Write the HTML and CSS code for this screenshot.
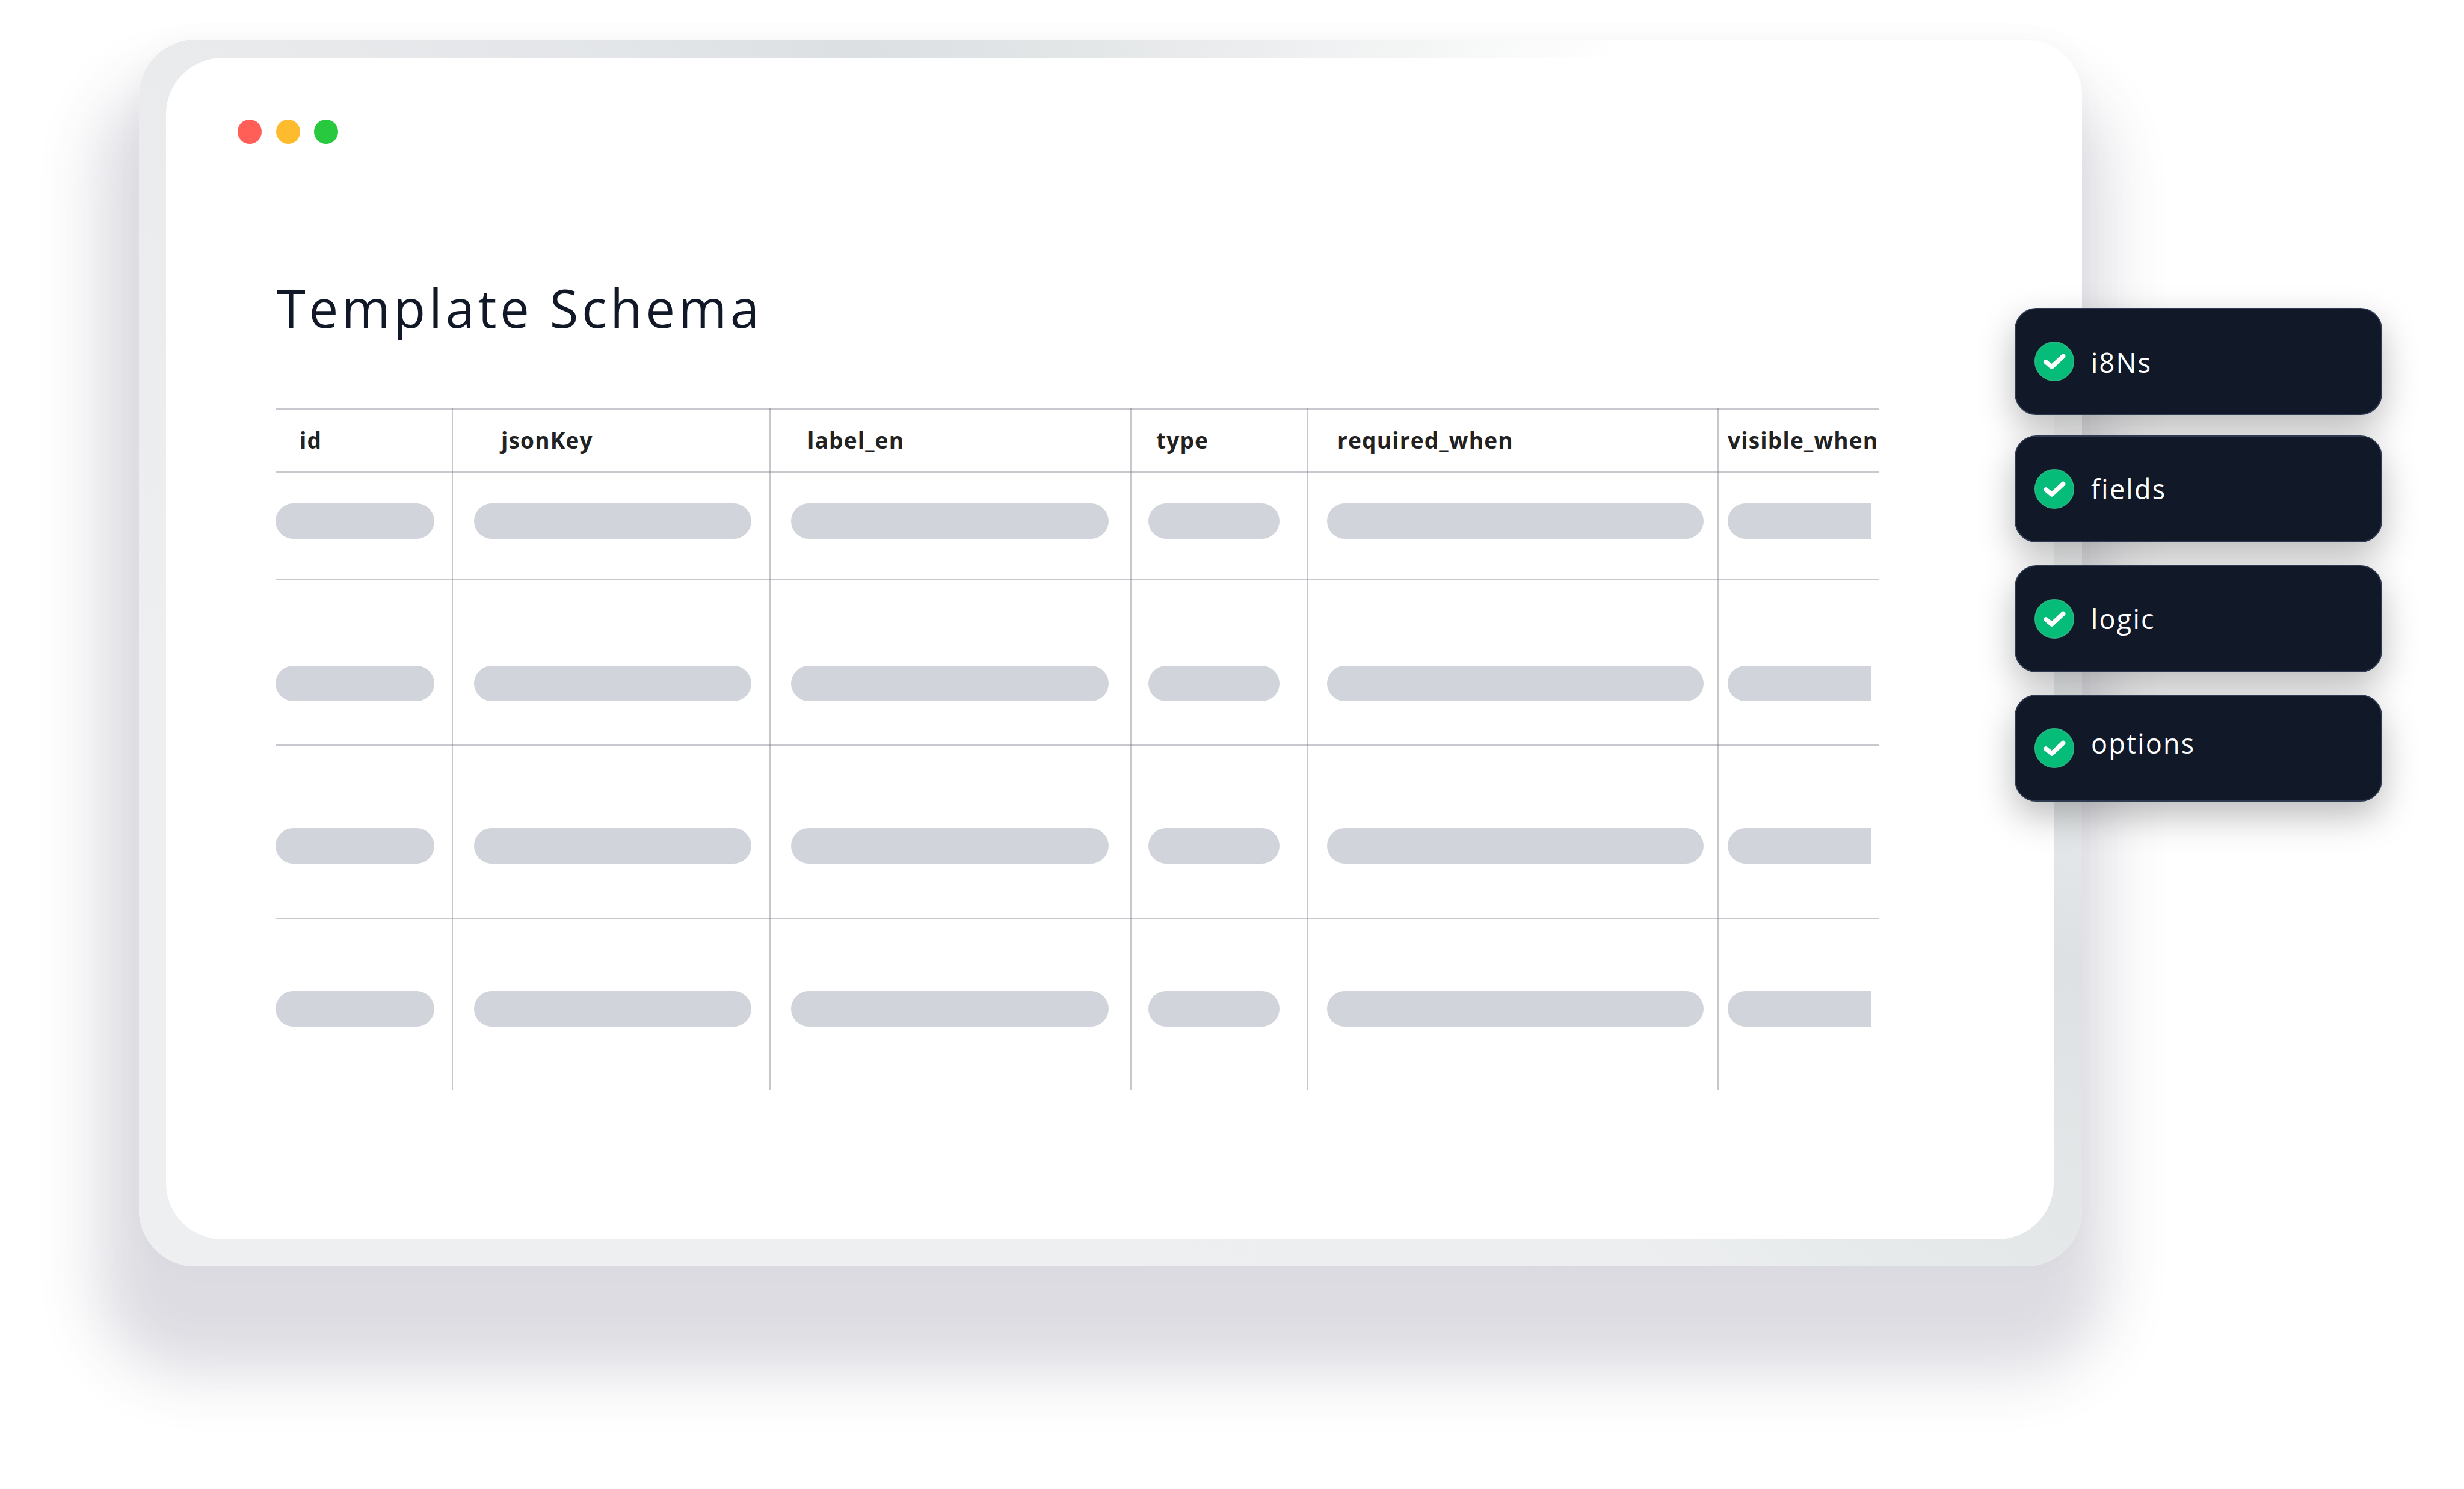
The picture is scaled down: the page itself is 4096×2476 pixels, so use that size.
FILE: index.html
```html
<!DOCTYPE html>
<html lang="en">
<head>
<meta charset="utf-8">
<title>Template Schema</title>
<link rel="stylesheet" href="styles.css">
</head>
<body>
<main class="stage">
  <section class="frame">
    <div class="sheet">
      <div class="dots">
        <span class="dot dot-red"></span>
        <span class="dot dot-yellow"></span>
        <span class="dot dot-green"></span>
      </div>
      <h1 class="title">Template Schema</h1>
      <div class="table">
        <div class="row row-head">
          <div class="cell c-id">id</div>
          <div class="cell c-key">jsonKey</div>
          <div class="cell c-label">label_en</div>
          <div class="cell c-type">type</div>
          <div class="cell c-req">required_when</div>
          <div class="cell c-vis">visible_when</div>
        </div>
        <div class="row row-1">
          <div class="cell"><div class="pill p-id"></div></div>
          <div class="cell"><div class="pill p-key"></div></div>
          <div class="cell"><div class="pill p-label"></div></div>
          <div class="cell"><div class="pill p-type"></div></div>
          <div class="cell"><div class="pill p-req"></div></div>
          <div class="cell"><div class="pill p-vis"></div></div>
        </div>
        <div class="row row-2">
          <div class="cell"><div class="pill p-id"></div></div>
          <div class="cell"><div class="pill p-key"></div></div>
          <div class="cell"><div class="pill p-label"></div></div>
          <div class="cell"><div class="pill p-type"></div></div>
          <div class="cell"><div class="pill p-req"></div></div>
          <div class="cell"><div class="pill p-vis"></div></div>
        </div>
        <div class="row row-3">
          <div class="cell"><div class="pill p-id"></div></div>
          <div class="cell"><div class="pill p-key"></div></div>
          <div class="cell"><div class="pill p-label"></div></div>
          <div class="cell"><div class="pill p-type"></div></div>
          <div class="cell"><div class="pill p-req"></div></div>
          <div class="cell"><div class="pill p-vis"></div></div>
        </div>
        <div class="row row-4">
          <div class="cell"><div class="pill p-id"></div></div>
          <div class="cell"><div class="pill p-key"></div></div>
          <div class="cell"><div class="pill p-label"></div></div>
          <div class="cell"><div class="pill p-type"></div></div>
          <div class="cell"><div class="pill p-req"></div></div>
          <div class="cell"><div class="pill p-vis"></div></div>
        </div>
      </div>
    </div>
  </section>
  <aside class="cards">
    <div class="card">
      <svg class="check" viewBox="0 0 70 70"><circle cx="35" cy="35" r="34" fill="#05bc79" stroke="#2bb583" stroke-width="2"/><path d="M20 36 L30.5 44.5 L50.5 26" fill="none" stroke="#fff" stroke-width="8" stroke-linecap="round" stroke-linejoin="round"/></svg>
      <span class="card-label l-i8ns">i8Ns</span>
    </div>
    <div class="card card-fields">
      <svg class="check" viewBox="0 0 70 70"><circle cx="35" cy="35" r="34" fill="#05bc79" stroke="#2bb583" stroke-width="2"/><path d="M20 36 L30.5 44.5 L50.5 26" fill="none" stroke="#fff" stroke-width="8" stroke-linecap="round" stroke-linejoin="round"/></svg>
      <span class="card-label">fields</span>
    </div>
    <div class="card card-logic">
      <svg class="check" viewBox="0 0 70 70"><circle cx="35" cy="35" r="34" fill="#05bc79" stroke="#2bb583" stroke-width="2"/><path d="M20 36 L30.5 44.5 L50.5 26" fill="none" stroke="#fff" stroke-width="8" stroke-linecap="round" stroke-linejoin="round"/></svg>
      <span class="card-label">logic</span>
    </div>
    <div class="card card-options">
      <svg class="check" viewBox="0 0 70 70"><circle cx="35" cy="35" r="34" fill="#05bc79" stroke="#2bb583" stroke-width="2"/><path d="M20 36 L30.5 44.5 L50.5 26" fill="none" stroke="#fff" stroke-width="8" stroke-linecap="round" stroke-linejoin="round"/></svg>
      <span class="card-label l-options">options</span>
    </div>
  </aside>
</main>
</body>
</html>
```
FILE: styles.css
```css
* { box-sizing: border-box; }
html, body { margin: 0; padding: 0; background: #fff; }
body { font-family: "Open Sans", "Liberation Sans", sans-serif; }

.stage {
  position: relative;
  width: 4096px;
  height: 2476px;
  padding: 66px 0 0 231px;
  overflow: hidden;
}

.frame {
  width: 3230px;
  height: 2040px;
  padding: 30px 47px 45px 45px;
  border-radius: 94px;
  background: conic-gradient(from 0deg at 50% 50%,
    #e5e8e9 0deg, #ebecee 11deg, #f3f5f5 26deg, #fcfcfc 37deg, #ffffff 40deg,
    #ffffff 70deg, #dde1e3 108deg, #e4e8e9 122deg, #eceeef 138deg,
    #eeeff1 180deg, #eeeff1 270deg, #e9ebed 302deg, #dde0e3 337deg, #e3e6e7 356deg, #e5e8e9 360deg);
  box-shadow: -13px 122px 100px 55px rgba(66, 61, 94, 0.18), 0 0 60px rgba(0, 0, 0, 0.025);
}

.sheet {
  height: 100%;
  padding: 103px 0 0 182px;
  border-radius: 94px;
  background: #fff;
}

.dots { display: flex; gap: 23.5px; margin-left: -63px; }
.dot { width: 40px; height: 40px; border-radius: 50%; }
.dot-red { background: #ff5f57; }
.dot-yellow { background: #ffbb2e; }
.dot-green { background: #29c93f; }

.title {
  margin: 222px 0 117px 2px;
  font-size: 87px;
  line-height: 100px;
  font-weight: 400;
  letter-spacing: 5.6px;
  color: #111827;
}

.table { width: 2665px; }

.row {
  display: grid;
  grid-template-columns: 293px 528px 600px 293px 683px 268px;
  border-top: 3px solid #c8c8ce;
}
.row-head { height: 106px; }
.row-1 { height: 178px; }
.row-2 { height: 276px; }
.row-3 { height: 288px; }
.row-4 { height: 287px; }

.cell {
  margin-top: -3px;
  border-left: 2px solid rgba(115, 115, 130, 0.4);
  overflow: hidden;
}
.cell:first-child { border-left: 0; }

.row-head .cell {
  display: flex;
  align-items: center;
  font-size: 37px;
  font-weight: 700;
  letter-spacing: 1.2px;
  color: #222;
  white-space: nowrap;
}
.c-id { padding-left: 40px; }
.c-key { padding-left: 80px; }
.c-label { padding-left: 61px; }
.c-type { padding-left: 41px; }
.c-req { padding-left: 49px; }
.c-vis { padding-left: 15px; }

.row-1 .cell { padding-top: 53px; }
.row-2 .cell { padding-top: 145px; }
.row-3 .cell { padding-top: 139px; }
.row-4 .cell { padding-top: 122px; }

.pill { height: 59px; border-radius: 30px; background: #d1d5db; }
.p-id { width: 264px; }
.p-key { width: 461px; margin-left: 35px; }
.p-label { width: 528px; margin-left: 34px; }
.p-type { width: 218px; margin-left: 28px; }
.p-req { width: 626px; margin-left: 32px; }
.p-vis { width: 238px; margin-left: 15px; border-radius: 30px 0 0 30px; }

.cards {
  position: absolute;
  left: 3349px;
  top: 512px;
  width: 611px;
  display: flex;
  flex-direction: column;
}
.card {
  display: flex;
  align-items: center;
  height: 178px;
  padding-left: 31px;
  border: 2px solid #2d3a52;
  border-radius: 36px;
  background: #111827;
  box-shadow: 0 24px 60px rgba(0, 0, 0, 0.27);
}
.card-fields { margin-top: 34px; }
.card-logic { margin-top: 38px; }
.card-options { margin-top: 37px; }

.check { width: 66px; height: 66px; flex: none; }
.card-label {
  margin-left: 28px;
  font-size: 45px;
  font-weight: 400;
  letter-spacing: 2.2px;
  line-height: 60px;
  color: #fff;
}
.l-i8ns { margin-top: 3px; }
.l-options { margin-bottom: 16px; }
```
